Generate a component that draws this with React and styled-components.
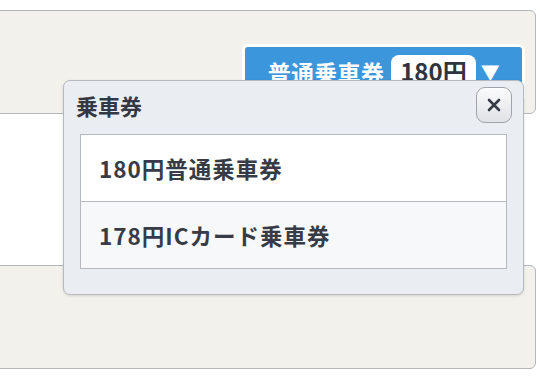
import React from 'react';
import styled, { createGlobalStyle } from 'styled-components';

const GlobalStyle = createGlobalStyle`
    body {
        margin: 0;
        background: #ffffff;
        font-family: 'Noto Sans CJK JP', 'Noto Sans', sans-serif;
    }
`;

const Page = styled.div`
    position: relative;
    width: 546px;
    height: 388px;
    padding: 10px 10px 0 0;
    box-sizing: border-box;
    overflow: hidden;
`;

const Panel = styled.div`
    margin-left: -8px;
    height: 104px;
    margin-top: ${(p) => p.$gap || 0}px;
    background: #f2f1ec;
    border: 1px solid #b3b6bb;
    border-radius: 6px;
    box-sizing: border-box;
    display: flex;
    justify-content: flex-end;
    align-items: flex-start;
    padding: 33px 10px 0 0;
`;

const TicketButton = styled.div`
    display: flex;
    align-items: flex-start;
    gap: 5px;
    height: 54px;
    padding: 8px 22px 0 23px;
    box-sizing: border-box;
    background: #3b96dc;
    border: 3px solid #ffffff;
    border-bottom: none;
    border-radius: 6px 6px 0 0;
    color: #ffffff;
    font-weight: 700;
    font-size: 23px;
    letter-spacing: 0.3px;
`;

const PricePill = styled.span`
    background: #ffffff;
    color: #2f3440;
    border-radius: 8px;
    padding: 0 9px;
    font-size: 24px;
    line-height: 32px;
    letter-spacing: 0;
    margin-left: 2px;
`;

const Arrow = styled.span`
    font-size: 19px;
    line-height: 34px;
`;

const Popup = styled.div`
    position: absolute;
    left: 63px;
    top: 80px;
    width: 461px;
    height: 215px;
    box-sizing: border-box;
    background: #eaedf1;
    border: 1px solid #b4b9c0;
    border-radius: 7px;
    box-shadow: 0 1px 3px rgba(0, 0, 0, 0.12);
    display: flex;
    flex-direction: column;
`;

const PopupHeader = styled.div`
    display: flex;
    justify-content: space-between;
    align-items: center;
    padding: 6px 11px 0 12px;
`;

const PopupTitle = styled.div`
    font-size: 22px;
    font-weight: 700;
    color: #333842;
`;

const CloseButton = styled.button`
    width: 36px;
    height: 36px;
    padding: 0;
    border: 1px solid #9ea4ac;
    border-radius: 9px;
    background: linear-gradient(#fbfbfc, #dfe2e6);
    box-shadow: inset 0 1px 0 #ffffff;
    color: #353a44;
    display: flex;
    align-items: center;
    justify-content: center;
`;

const TicketList = styled.div`
    margin: 11px 16px 0 16px;
    border: 1px solid #b4b9c0;
`;

const TicketItem = styled.div`
    height: 66px;
    display: flex;
    align-items: center;
    padding-left: 18px;
    background: ${(p) => (p.$alt ? '#f7f8f9' : '#ffffff')};
    border-top: ${(p) => (p.$alt ? '1px solid #b4b9c0' : 'none')};
    font-size: 22.5px;
    font-weight: 700;
    color: #363b46;
    letter-spacing: 1px;
`;

const tickets = ['180円普通乗車券', '178円ICカード乗車券'];

const App = () => {
    return (
        <>
            <GlobalStyle />
            <Page>
                <Panel>
                    <TicketButton>
                        普通乗車券
                        <PricePill>180円</PricePill>
                        <Arrow>▼</Arrow>
                    </TicketButton>
                </Panel>
                <Panel $gap={151} />
                <Popup>
                    <PopupHeader>
                        <PopupTitle>乗車券</PopupTitle>
                        <CloseButton>
                            <svg width="16" height="16" viewBox="0 0 16 16">
                                <path d="M3 3 L13 13 M13 3 L3 13" stroke="currentColor" strokeWidth="2.6" strokeLinecap="round" />
                            </svg>
                        </CloseButton>
                    </PopupHeader>
                    <TicketList>
                        {tickets.map((t, i) => (
                            <TicketItem key={t} $alt={i > 0}>{t}</TicketItem>
                        ))}
                    </TicketList>
                </Popup>
            </Page>
        </>
    );
};

export default App;
